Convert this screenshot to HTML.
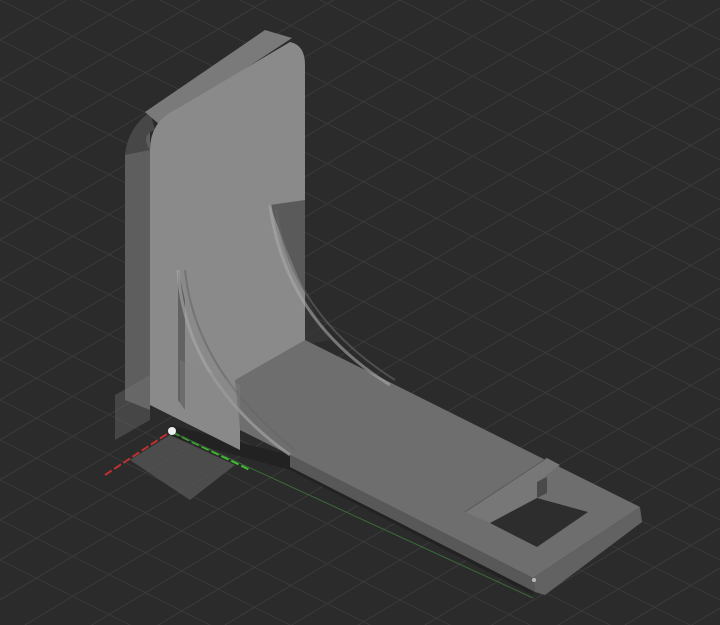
<!DOCTYPE html>
<html><head><style>html,body{margin:0;padding:0;background:#2b2b2b;overflow:hidden;width:720px;height:625px}svg{display:block}</style></head>
<body>
<svg width="720" height="625" viewBox="0 0 720 625" xmlns="http://www.w3.org/2000/svg">
<rect width="720" height="625" fill="#2b2b2b"/>
<g stroke="#3b3b3b" stroke-width="1">
<path d="M-400,-200 L800,400 M-400,-160 L800,440 M-400,-120 L800,480 M-400,-80 L800,520 M-400,-40 L800,560 M-400,0 L800,600 M-400,40 L800,640 M-400,80 L800,680 M-400,120 L800,720 M-400,160 L800,760 M-400,200 L800,800 M-400,240 L800,840 M-400,280 L800,880 M-400,320 L800,920 M-400,360 L800,960 M-400,-240 L800,360 M-400,-280 L800,320 M-400,-320 L800,280 M-400,-360 L800,240 M-400,-400 L800,200 M-400,-440 L800,160 M-400,-480 L800,120 M-400,-520 L800,80 M-400,-560 L800,40 M-400,-600 L800,0"/>
<path d="M-200,0 L800,-600 M-200,40 L800,-560 M-200,80 L800,-520 M-200,120 L800,-480 M-200,160 L800,-440 M-200,200 L800,-400 M-200,240 L800,-360 M-200,280 L800,-320 M-200,320 L800,-280 M-200,360 L800,-240 M-200,400 L800,-200 M-200,440 L800,-160 M-200,480 L800,-120 M-200,520 L800,-80 M-200,560 L800,-40 M-200,600 L800,0 M-200,640 L800,40 M-200,680 L800,80 M-200,720 L800,120 M-200,760 L800,160 M-200,800 L800,200 M-200,840 L800,240 M-200,880 L800,280 M-200,920 L800,320 M-200,960 L800,360 M-200,1000 L800,400 M-200,1040 L800,440 M-200,1080 L800,480 M-200,1120 L800,520 M-200,1160 L800,560"/>
</g>
<polygon points="170,425 290,455 533,578 533,595 290,470 170,437" fill="#222"/>
<polygon points="130,460 170,435 235,465 190,500" fill="#555" opacity="0.8"/>
<line x1="105" y1="475" x2="170" y2="432" stroke="#c03030" stroke-width="2" stroke-dasharray="8,3"/>
<line x1="172" y1="432" x2="250" y2="470" stroke="#40c030" stroke-width="2" stroke-dasharray="8,3"/>
<line x1="172" y1="432" x2="533" y2="598" stroke="#3a6a3a" stroke-width="1"/>
<path d="M125,155 Q128,128 150,112 L150,410 L125,400 Z" fill="#5e5e5e"/>
<path d="M125,155 Q128,128 150,112 L155,130 Q140,135 150,150 Z" fill="#474747"/>
<polygon points="145,112 265,30 292,38 160,125" fill="#7a7a7a"/>
<path d="M150,150 Q150,122 175,110 L290,42 Q305,45 305,65 L305,345 L240,380 L240,450 L150,405 Z" fill="#8a8a8a"/>
<path d="M270,205 L305,200 L305,345 L330,340 Q300,290 270,205 Z" fill="#3a3a3a" opacity="0.6"/>
<path d="M178,270 L185,300 L185,410 L178,400 Z" fill="#3a3a3a" opacity="0.5"/>
<!-- base top face -->
<polygon points="235,380 305,340 640,507 533,578 290,455 240,430" fill="#6e6e6e"/>
<!-- lower notch face -->
<polygon points="465,512 547,458 560,465 537,482 537,498 490,523" fill="#777"/>
<line x1="547" y1="458" x2="465" y2="512" stroke="#5a5a5a" stroke-width="1"/>
<!-- hole -->
<polygon points="490,523 537,547 588,512 537,498" fill="#2d2d2d"/>
<polygon points="537,482 547,477 547,493 537,498" fill="#4a4a4a"/>
<!-- base front edge -->
<polygon points="290,455 533,578 535,592 290,467" fill="#585858"/>
<polygon points="533,578 640,507 642,522 545,595 535,592" fill="#626262"/>
<circle cx="534" cy="580" r="2" fill="#bbb"/>
<path d="M178,270 Q185,380 290,455" fill="none" stroke="#aaa" stroke-width="3" opacity="0.6"/>
<path d="M185,270 Q195,370 295,450" fill="none" stroke="#666" stroke-width="2" opacity="0.6"/>
<path d="M270,205 Q285,320 390,385" fill="none" stroke="#aaa" stroke-width="3" opacity="0.6"/>
<path d="M276,210 Q292,315 395,380" fill="none" stroke="#666" stroke-width="2" opacity="0.6"/>
<polygon points="115,395 150,375 150,420 115,440" fill="#777" opacity="0.35"/>
<polygon points="180,360 240,385 240,450 180,420" fill="#888" opacity="0.3"/>
<circle cx="172" cy="431" r="4" fill="#eee"/>
</svg>
</body></html>
